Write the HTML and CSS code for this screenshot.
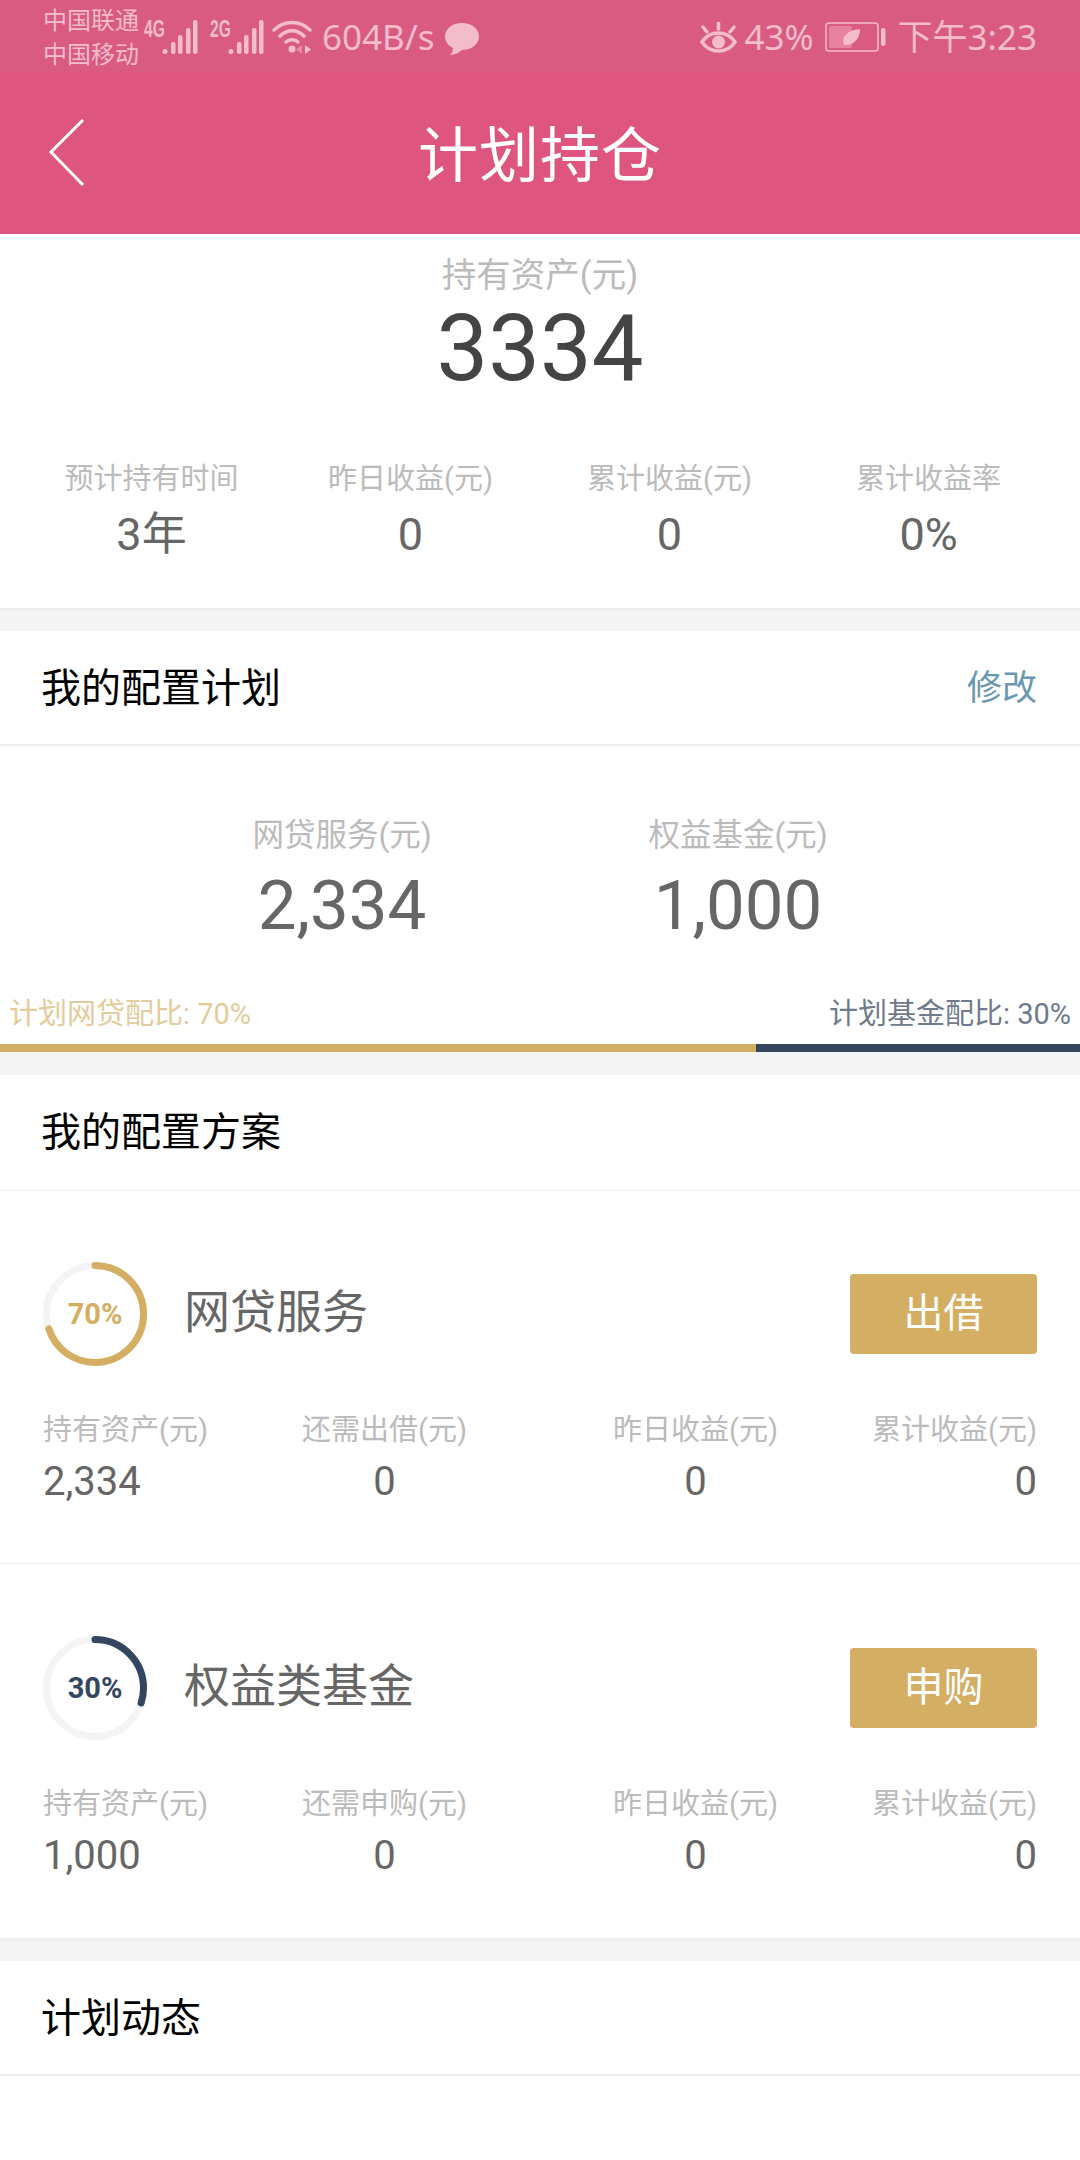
FILE: index.html
```html
<!DOCTYPE html>
<html lang="zh-CN">
<head>
    <meta charset="UTF-8">
    <meta name="viewport" content="width=device-width, initial-scale=1.0">
    <title>计划持仓</title>
    <link rel="stylesheet" href="styles.css">
</head>
<body>
    <div class="status-bar">
        <div class="status-left">
            <div class="carrier"><span>中国联通</span><span>中国移动</span></div>
            <div class="signal">
                <span class="net">4G</span>
                <svg width="36" height="36" viewBox="0 0 36 36"><g fill="#f5bccd"><circle cx="3" cy="32.500" r="2.500"/><rect x="9" y="23" width="4.500" height="12" rx="2"/><rect x="16" y="16" width="4.500" height="19" rx="2"/><rect x="24" y="9" width="4.500" height="26" rx="2"/><rect x="31" y="1" width="4.500" height="34" rx="2"/></g></svg>
            </div>
            <div class="signal">
                <span class="net">2G</span>
                <svg width="36" height="36" viewBox="0 0 36 36"><g fill="#f5bccd"><circle cx="3" cy="32.500" r="2.500"/><rect x="9" y="23" width="4.500" height="12" rx="2"/><rect x="16" y="16" width="4.500" height="19" rx="2"/><rect x="24" y="9" width="4.500" height="26" rx="2"/><rect x="31" y="1" width="4.500" height="34" rx="2"/></g></svg>
            </div>
            <svg class="wifi" width="40" height="36" viewBox="0 0 40 36"><g fill="none" stroke="#f5bccd" stroke-width="3.500" stroke-linecap="round"><path d="M2 11C12 1 28 1 38 11"/><path d="M8 17C15 10 25 10 32 17"/><path d="M14 23C17 20 23 20 26 23"/></g><circle cx="20" cy="30" r="3.500" fill="#f5bccd"/><path d="M33 26v9l6-4.500z" fill="#f5bccd"/><path d="M30 26v9l-6-4.500z" fill="#e88aa8"/></svg>
            <span class="speed">604B/s</span>
            <svg class="bubble" width="36" height="36" viewBox="0 0 36 36"><path d="M18 2C8 2 1 8 1 15.500C1 21 5 25 9 27C9 30 8 32 6 34C11 34 15 31.500 18 29C28 29 35 23 35 15.500C35 8 28 2 18 2Z" fill="#f3bccc"/></svg>
        </div>
        <div class="status-right">
            <svg width="37" height="34" viewBox="0 0 37 34"><path d="M2 20C10 8 27 8 35 20C27 32 10 32 2 20Z" fill="none" stroke="#f5bccd" stroke-width="3.500"/><circle cx="18.500" cy="20" r="6.500" fill="#f5bccd"/><path d="M18.500 1v6M3 5l4 5M34 5l-4 5" stroke="#f5bccd" stroke-width="3.500" stroke-linecap="round"/></svg>
            <span class="battery-pct">43%</span>
            <svg width="61" height="30" viewBox="0 0 61 30"><rect x="1" y="1" width="52" height="28" rx="3" fill="none" stroke="#f5bccd" stroke-width="1.500"/><rect x="4" y="4" width="23" height="22" rx="2" fill="#e8809f"/><path d="M19 23C16 15 22 8 35 7C35 16 29 24 19 23Z" fill="#f5bccd"/><rect x="56" y="6" width="4.500" height="18" rx="2" fill="#f5bccd"/></svg>
            <span class="clock">下午3:23</span>
        </div>
    </div>

    <header class="nav-bar">
        <svg class="back" width="38" height="70" viewBox="0 0 38 70"><path d="M35 2L3 34L35 67" fill="none" stroke="#fff" stroke-width="3"/></svg>
        <h1>计划持仓</h1>
    </header>

    <section class="summary card">
        <div class="summary-label">持有资产(元)</div>
        <div class="summary-value">3334</div>
        <div class="summary-stats">
            <div class="stat"><div class="stat-label">预计持有时间</div><div class="stat-value">3年</div></div>
            <div class="stat"><div class="stat-label">昨日收益(元)</div><div class="stat-value">0</div></div>
            <div class="stat"><div class="stat-label">累计收益(元)</div><div class="stat-value">0</div></div>
            <div class="stat"><div class="stat-label">累计收益率</div><div class="stat-value">0%</div></div>
        </div>
    </section>

    <section class="plan">
        <div class="section-title"><span>我的配置计划</span><a class="edit">修改</a></div>
        <div class="plan-amounts">
            <div class="amount"><div class="amount-label">网贷服务(元)</div><div class="amount-value">2,334</div></div>
            <div class="amount"><div class="amount-label">权益基金(元)</div><div class="amount-value">1,000</div></div>
        </div>
        <div class="ratio-labels">
            <span class="ratio-gold">计划网贷配比: 70%</span>
            <span class="ratio-navy">计划基金配比: 30%</span>
        </div>
        <div class="ratio-bar"><div class="bar-gold"></div><div class="bar-navy"></div></div>
    </section>

    <section class="scheme card">
        <div class="section-title"><span>我的配置方案</span></div>

        <div class="fund">
            <div class="fund-head">
                <svg class="ring" width="104" height="104" viewBox="0 0 104 104">
                    <circle cx="52" cy="52" r="48.500" fill="none" stroke="#f4f4f4" stroke-width="7"/>
                    <circle class="ring-gold" cx="52" cy="52" r="48.500" pathLength="100" stroke-dasharray="70 100" transform="rotate(-90 52 52)"/>
                    <text class="ring-text gold" x="52" y="62">70%</text>
                </svg>
                <div class="fund-name">网贷服务</div>
                <a class="fund-btn">出借</a>
            </div>
            <div class="fund-stats">
                <div class="stat-pair">
                    <div class="fund-stat left"><div class="stat-label">持有资产(元)</div><div class="fund-value">2,334</div></div>
                    <div class="fund-stat"><div class="stat-label">还需出借(元)</div><div class="fund-value">0</div></div>
                </div>
                <div class="stat-pair">
                    <div class="fund-stat"><div class="stat-label">昨日收益(元)</div><div class="fund-value">0</div></div>
                    <div class="fund-stat right"><div class="stat-label">累计收益(元)</div><div class="fund-value">0</div></div>
                </div>
            </div>
        </div>

        <div class="fund">
            <div class="fund-head">
                <svg class="ring" width="104" height="104" viewBox="0 0 104 104">
                    <circle cx="52" cy="52" r="48.500" fill="none" stroke="#f4f4f4" stroke-width="7"/>
                    <circle class="ring-navy" cx="52" cy="52" r="48.500" pathLength="100" stroke-dasharray="30 100" transform="rotate(-90 52 52)"/>
                    <text class="ring-text navy" x="52" y="62">30%</text>
                </svg>
                <div class="fund-name">权益类基金</div>
                <a class="fund-btn">申购</a>
            </div>
            <div class="fund-stats">
                <div class="stat-pair">
                    <div class="fund-stat left"><div class="stat-label">持有资产(元)</div><div class="fund-value">1,000</div></div>
                    <div class="fund-stat"><div class="stat-label">还需申购(元)</div><div class="fund-value">0</div></div>
                </div>
                <div class="stat-pair">
                    <div class="fund-stat"><div class="stat-label">昨日收益(元)</div><div class="fund-value">0</div></div>
                    <div class="fund-stat right"><div class="stat-label">累计收益(元)</div><div class="fund-value">0</div></div>
                </div>
            </div>
        </div>
    </section>

    <section class="news">
        <div class="section-title"><span>计划动态</span></div>
    </section>
</body>
</html>
```

FILE: styles.css
```css
* {
    box-sizing: border-box;
}
html, body {
    height: 2160px;
}
body {
    margin: 0;
    overflow: hidden;
    display: flex;
    flex-direction: column;
    background-color: #f4f4f4;
    font-family: Roboto, "Noto Sans CJK SC", sans-serif;
    color: #666;
}
section {
    background-color: #fff;
}

/* status bar */
.status-bar {
    height: 72px;
    flex-shrink: 0;
    padding: 1px 43px 0;
    display: flex;
    justify-content: space-between;
    background-color: #d95b82;
    color: #f5bccd;
}
.status-left, .status-right {
    display: flex;
    align-items: flex-start;
}
.carrier {
    display: flex;
    flex-direction: column;
    margin-top: 3px;
    font-size: 24px;
    line-height: 34px;
    width: 101px;
}
.signal {
    position: relative;
    display: flex;
    align-items: flex-start;
    padding-top: 18px;
    width: 66px;
}
.signal svg {
    margin-left: 18px;
}
.net {
    position: absolute;
    left: 0;
    top: 17px;
    font-family: "Liberation Sans", sans-serif;
    font-weight: bold;
    font-size: 23px;
    line-height: 22px;
    transform: scaleX(0.68);
    transform-origin: left;
}
.wifi {
    margin: 18px 10px 0 -4px;
}
.speed, .battery-pct, .clock {
    font-family: "Noto Sans", "Noto Sans CJK SC", sans-serif;
    font-size: 35px;
    line-height: 72px;
}
.speed {
    width: 122px;
}
.bubble {
    margin-top: 20px;
}
.status-right > svg {
    margin-top: 21px;
}
.battery-pct {
    margin: 0 11px 0 7px;
}
.clock {
    margin-left: 12px;
}

/* title bar */
.nav-bar {
    position: relative;
    height: 162px;
    flex-shrink: 0;
    display: flex;
    align-items: center;
    justify-content: center;
    background-color: #de5680;
}
.nav-bar h1 {
    margin: 0;
    padding-top: 8px;
    font-size: 60px;
    font-weight: 400;
    color: #fff;
    line-height: 80px;
    letter-spacing: 1px;
}
.back {
    position: absolute;
    left: 48px;
    top: 46px;
}

/* summary */
.card {
    box-shadow: 0 3px 0 #eee;
}
.summary {
    height: 374px;
    flex-shrink: 0;
    padding: 21px 22px 0;
    text-align: center;
}
.summary-label {
    font-size: 34.500px;
    line-height: 40px;
    color: #bbb;
}
.summary-value {
    margin-top: 6px;
    font-size: 92px;
    line-height: 96px;
    color: #444;
}
.summary-stats {
    margin-top: 62px;
    display: grid;
    grid-template-columns: repeat(4, 1fr);
}
.stat-label {
    font-size: 29px;
    line-height: 40px;
    color: #bbb;
    white-space: nowrap;
}
.stat-value {
    margin-top: 8px;
    font-size: 45px;
    line-height: 56px;
}

/* sections */
.plan {
    margin-top: 23px;
    flex-shrink: 0;
}
.section-title {
    display: flex;
    justify-content: space-between;
    align-items: center;
    height: 115px;
    padding: 0 43px 6px 41px;
    font-size: 40px;
    color: #000;
    border-bottom: 2px solid #eee;
}
.edit {
    font-size: 35px;
    color: #6a98b0;
}

/* plan amounts */
.plan-amounts {
    display: grid;
    grid-template-columns: 396px 396px;
    justify-content: center;
    padding-top: 69px;
    text-align: center;
}
.amount-label {
    font-size: 31.500px;
    line-height: 42px;
    color: #bbb;
}
.amount-value {
    margin-top: 9px;
    font-size: 69px;
    line-height: 80px;
}
.ratio-labels {
    display: flex;
    justify-content: space-between;
    padding: 0 9px;
    margin-top: 48px;
    font-size: 29px;
    line-height: 40px;
}
.ratio-gold {
    color: #e2cc9b;
}
.ratio-navy {
    color: #6f7b8b;
}
.ratio-bar {
    display: flex;
    height: 8px;
    margin-top: 10px;
}
.bar-gold {
    width: 70%;
    background-color: #d4ae62;
}
.bar-navy {
    width: 30%;
    background-color: #33455f;
}

/* fund rows */
.scheme {
    margin-top: 23px;
    height: 863px;
    flex-shrink: 0;
}
.scheme .section-title {
    height: 116px;
    padding-bottom: 8px;
    border-bottom-width: 1px;
}
.fund {
    height: 373px;
    padding: 71px 43px 0;
    border-bottom: 1px solid #eee;
}
.fund:last-child {
    height: 374px;
    padding-top: 72px;
    border-bottom: 0;
}
.fund-head {
    display: flex;
    align-items: center;
    height: 104px;
}
.ring {
    flex-shrink: 0;
}
.ring-gold, .ring-navy {
    fill: none;
    stroke-width: 7;
    stroke-linecap: round;
}
.ring-gold {
    stroke: #d4ae62;
}
.ring-navy {
    stroke: #33455f;
}
.ring-text {
    font-size: 29px;
    font-weight: 700;
    text-anchor: middle;
}
.ring-text.gold {
    fill: #d4ae62;
}
.ring-text.navy {
    fill: #33455f;
}
.fund-name {
    margin-left: 37px;
    padding-bottom: 12px;
    font-size: 46px;
    flex: 1;
}
.fund-btn {
    width: 187px;
    height: 80px;
    padding-bottom: 9px;
    display: flex;
    align-items: center;
    justify-content: center;
    border-radius: 4px;
    background-color: #d4ae62;
    font-size: 40px;
    color: #fff;
}
.fund-stats {
    display: flex;
    justify-content: space-between;
    margin-top: 44px;
}
.stat-pair {
    width: 424px;
    display: flex;
    justify-content: space-between;
}
.fund-stat {
    text-align: center;
}
.fund-stat.left {
    text-align: left;
}
.fund-stat.right {
    text-align: right;
}
.fund-value {
    margin-top: 7px;
    font-size: 40px;
    line-height: 50px;
}

.news {
    margin-top: 23px;
    flex: 1;
}
```
